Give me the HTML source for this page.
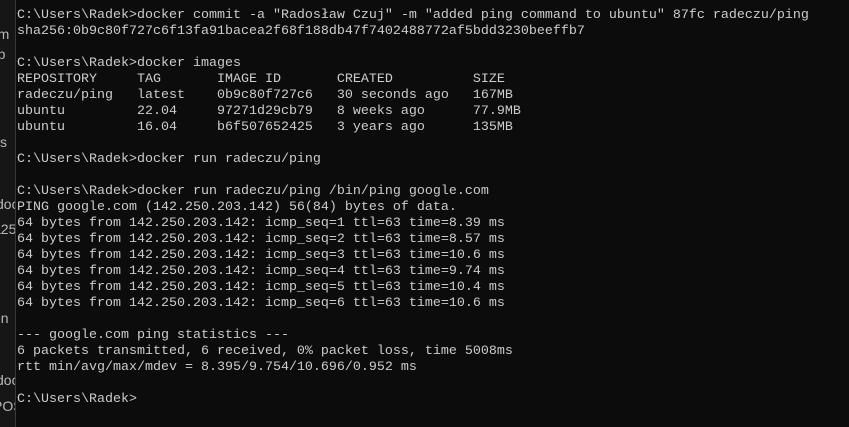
<!DOCTYPE html>
<html><head><style>
html,body{margin:0;padding:0;width:849px;height:427px;background:#0c0c0c;overflow:hidden;}
#strip{position:absolute;left:0;top:0;width:15px;height:427px;background:#161616;border-right:1px solid #3a3a3a;overflow:hidden;}
#strip div{position:absolute;left:-7px;font:14px "Liberation Sans",sans-serif;color:#b8b8b8;white-space:nowrap;}
pre{position:absolute;left:17px;top:8px;margin:0;font-family:"Liberation Mono",monospace;font-size:13.33px;line-height:16px;color:#cccccc;}
</style></head><body>
<div id="strip">
<div style="top:26px">-m</div>
<div style="top:46px">rp</div>
<div style="top:134px">ss</div>
<div style="top:196px;left:-4px">doc</div>
<div style="top:221px">a25</div>
<div style="top:310px">en</div>
<div style="top:372px;left:-4px">doc</div>
<div style="top:398px">POS</div>
</div>
<pre>C:\Users\Radek&gt;docker commit -a "Radosław Czuj" -m "added ping command to ubuntu" 87fc radeczu/ping
sha256:0b9c80f727c6f13fa91bacea2f68f188db47f7402488772af5bdd3230beeffb7

C:\Users\Radek&gt;docker images
REPOSITORY     TAG       IMAGE ID       CREATED          SIZE
radeczu/ping   latest    0b9c80f727c6   30 seconds ago   167MB
ubuntu         22.04     97271d29cb79   8 weeks ago      77.9MB
ubuntu         16.04     b6f507652425   3 years ago      135MB

C:\Users\Radek&gt;docker run radeczu/ping

C:\Users\Radek&gt;docker run radeczu/ping /bin/ping google.com
PING google.com (142.250.203.142) 56(84) bytes of data.
64 bytes from 142.250.203.142: icmp_seq=1 ttl=63 time=8.39 ms
64 bytes from 142.250.203.142: icmp_seq=2 ttl=63 time=8.57 ms
64 bytes from 142.250.203.142: icmp_seq=3 ttl=63 time=10.6 ms
64 bytes from 142.250.203.142: icmp_seq=4 ttl=63 time=9.74 ms
64 bytes from 142.250.203.142: icmp_seq=5 ttl=63 time=10.4 ms
64 bytes from 142.250.203.142: icmp_seq=6 ttl=63 time=10.6 ms

--- google.com ping statistics ---
6 packets transmitted, 6 received, 0% packet loss, time 5008ms
rtt min/avg/max/mdev = 8.395/9.754/10.696/0.952 ms

C:\Users\Radek&gt;</pre>
</body></html>
